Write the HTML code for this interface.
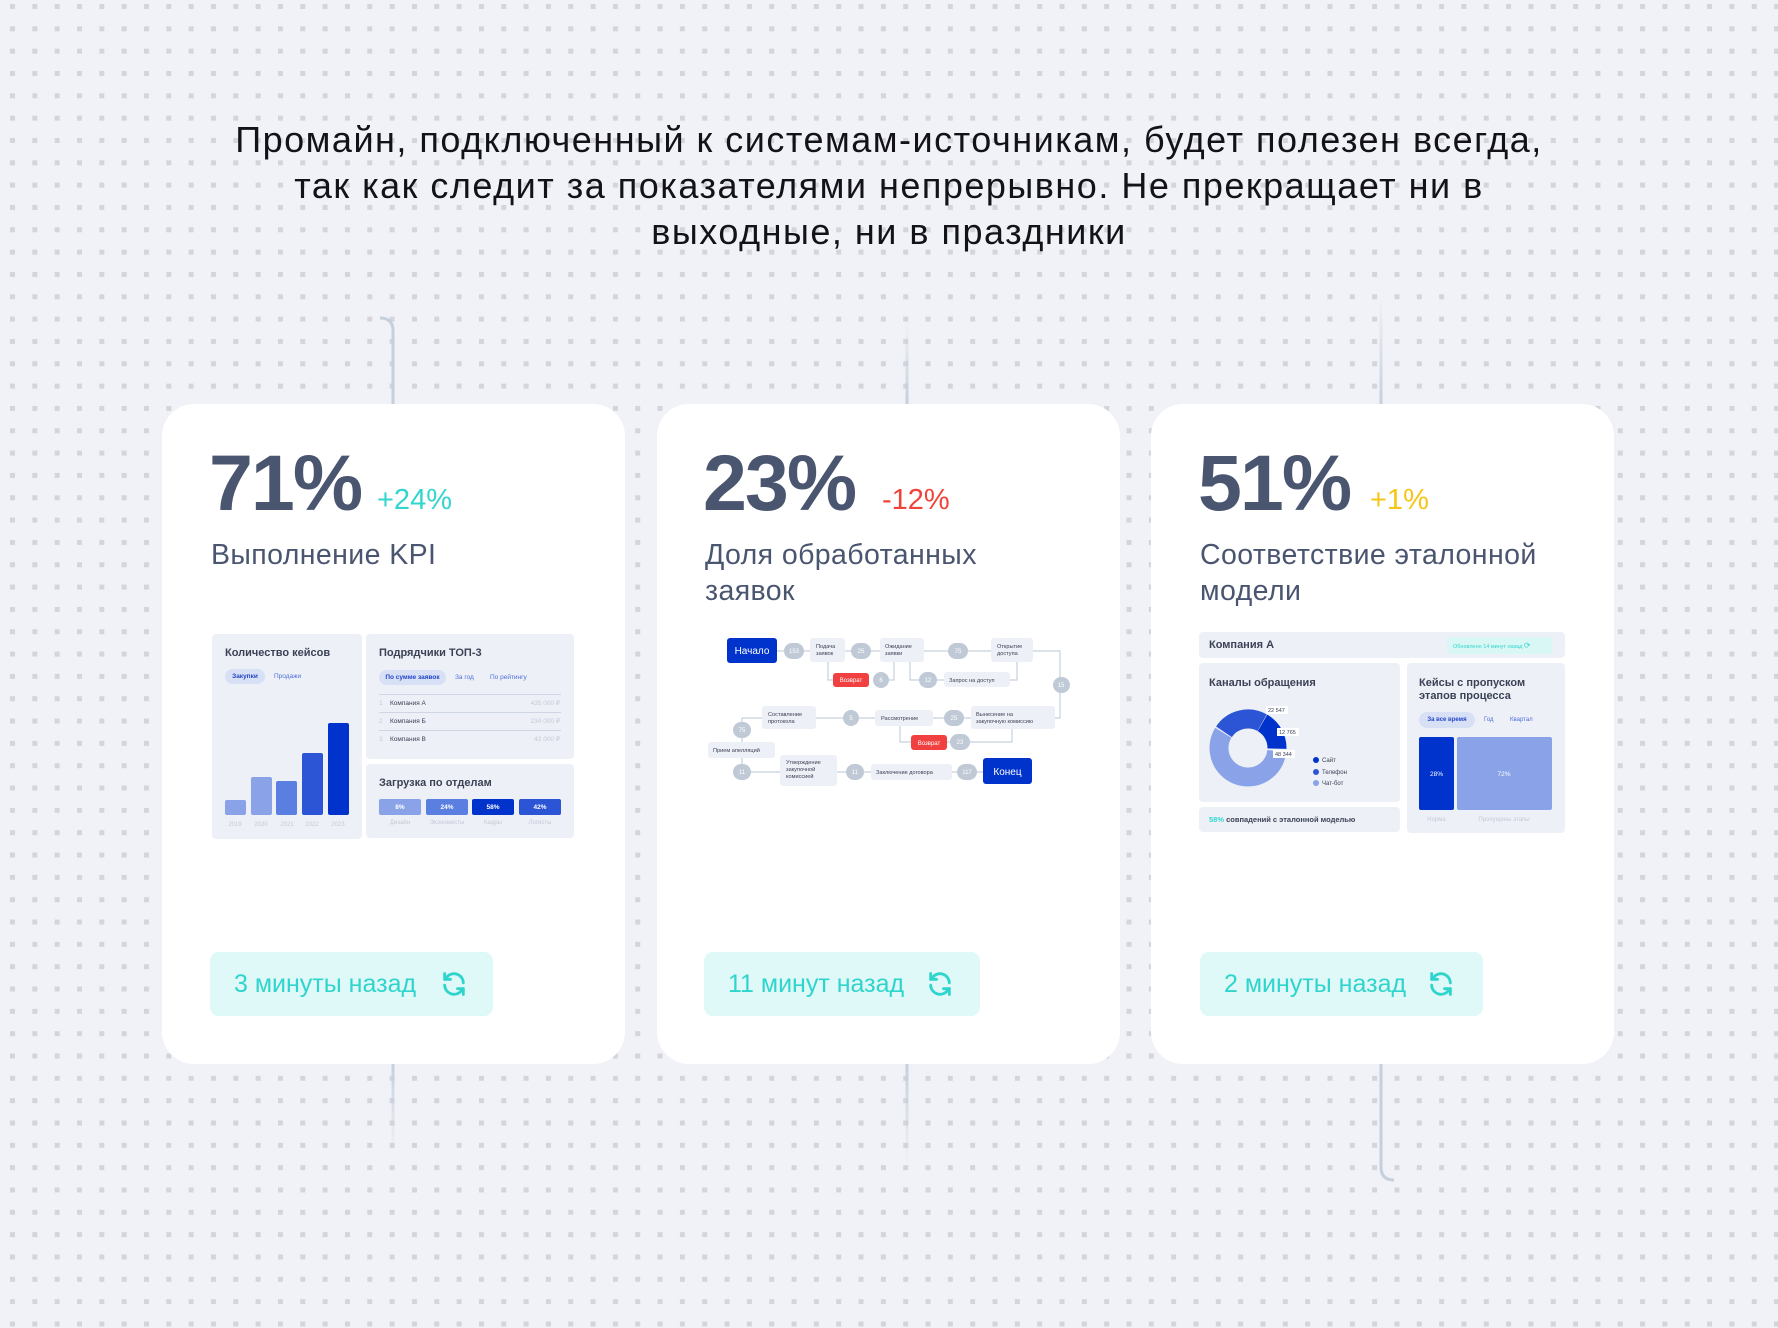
<!DOCTYPE html>
<html><head><meta charset="utf-8">
<style>
*{margin:0;padding:0;box-sizing:border-box}
html,body{width:1778px;height:1328px;overflow:hidden}
body{position:relative;font-family:"Liberation Sans","Noto Sans CJK SC",sans-serif;background-color:#f1f2f7;}
#dots{position:absolute;left:0;top:0;width:1778px;height:1328px}
.abs{position:absolute}
h1{position:absolute;left:0;width:1778px;top:117px;text-align:center;font-weight:400;font-size:36px;letter-spacing:1.5px;line-height:46px;color:#121218}
.card{position:absolute;top:404px;width:463px;height:660px;background:#fff;border-radius:32px}
.big{position:absolute;top:438px;font-size:79px;font-weight:700;color:#4a5570;letter-spacing:-2px;line-height:90px}
.delta{position:absolute;top:483px;font-size:29px;line-height:34px}
.ttl{position:absolute;top:537px;font-size:28.5px;letter-spacing:0.4px;line-height:36px;color:#4a5570}
.btn{position:absolute;top:952px;height:64px;border-radius:9px;background:#dff8f8;color:#2fd5cc;font-size:25px;line-height:64px;padding-left:24px}
.btn svg{position:absolute;top:18px}
.pn{position:absolute;background:#eef0f7;border-radius:4px}
.t11{font-size:11px;font-weight:700;color:#3b4256;position:absolute}
</style></head><body>
<svg id="dots" width="1778" height="1328">
<defs><pattern id="p" x="10" y="4" width="22.33" height="22.33" patternUnits="userSpaceOnUse"><rect x="0" y="0" width="5" height="5" fill="#d4d4db"/></pattern>
<linearGradient id="gh" x1="0" x2="1"><stop offset="0" stop-color="#c5d0dc" stop-opacity="0"/><stop offset="1" stop-color="#c5d0dc"/></linearGradient>
<linearGradient id="gh2" x1="1" x2="0"><stop offset="0" stop-color="#c5d0dc" stop-opacity="0"/><stop offset="1" stop-color="#c5d0dc"/></linearGradient>
<linearGradient id="gvt" x1="0" x2="0" y1="0" y2="1"><stop offset="0" stop-color="#c5d0dc" stop-opacity="0"/><stop offset="1" stop-color="#c5d0dc"/></linearGradient>
<linearGradient id="gvb" x1="0" x2="0" y1="0" y2="1"><stop offset="0" stop-color="#c5d0dc"/><stop offset="1" stop-color="#c5d0dc" stop-opacity="0"/></linearGradient>
</defs>
<rect width="1778" height="1328" fill="url(#p)"/>
<path d="M240 318 H381" stroke="url(#gh)" stroke-width="3" fill="none"/>
<path d="M380 318 Q393 318 393 331 V404" stroke="#c5d0dc" stroke-width="3" fill="none"/>
<rect x="391.5" y="1064" width="3" height="90" fill="url(#gvb)"/>
<rect x="905.5" y="320" width="3" height="84" fill="url(#gvt)"/>
<rect x="905.5" y="1064" width="3" height="100" fill="url(#gvb)"/>
<rect x="1379.5" y="296" width="3" height="108" fill="url(#gvt)"/>
<path d="M1381 1064 V1167 Q1381 1180 1394 1180" stroke="#c5d0dc" stroke-width="3" fill="none"/>
<path d="M1393 1180 H1585" stroke="url(#gh2)" stroke-width="3" fill="none"/>
</svg>

<h1>Промайн, подключенный к системам-источникам, будет полезен всегда,<br>так как следит за показателями непрерывно. Не прекращает ни в<br>выходные, ни в праздники</h1>

<div class="card" style="left:162px"></div>
<div class="card" style="left:657px"></div>
<div class="card" style="left:1151px"></div>

<!-- card 1 -->
<div class="big" style="left:209px">71%</div>
<div class="delta" style="left:377px;color:#33d6cf">+24%</div>
<div class="ttl" style="left:211px">Выполнение KPI</div>

<div class="pn" style="left:212px;top:634px;width:150px;height:205px"></div>
<div class="t11" style="left:225px;top:647px;font-weight:600">Количество кейсов</div>
<div class="abs" style="left:225px;top:669px;width:40px;height:15px;border-radius:8px;background:#d8e0f6;font-size:6.5px;color:#2346c8;font-weight:700;text-align:center;line-height:15px">Закупки</div>
<div class="abs" style="left:274px;top:669px;font-size:6.5px;color:#4d6fdc;line-height:15px">Продажи</div>
<svg class="abs" style="left:212px;top:700px" width="150" height="135">
<rect x="13" y="100" width="21" height="15" rx="2" fill="#8aa3e8"/>
<rect x="39" y="77" width="21" height="38" rx="2" fill="#8aa3e8"/>
<rect x="64" y="81" width="21" height="34" rx="2" fill="#5b7fe0"/>
<rect x="90" y="53" width="21" height="62" rx="2" fill="#2c55d6"/>
<rect x="116" y="23" width="21" height="92" rx="2" fill="#0033cc"/>
<g font-size="6" fill="#c3c9d6" text-anchor="middle" font-family="Liberation Sans"><text x="23" y="126">2019</text><text x="49" y="126">2020</text><text x="75" y="126">2021</text><text x="100" y="126">2022</text><text x="126" y="126">2023</text></g>
</svg>

<div class="pn" style="left:366px;top:634px;width:208px;height:125px"></div>
<div class="t11" style="left:379px;top:647px;font-weight:600">Подрядчики ТОП-3</div>
<div class="abs" style="left:379px;top:670px;width:67px;height:15px;border-radius:8px;background:#d8e0f6;font-size:6.5px;color:#2346c8;font-weight:700;text-align:center;line-height:15px">По сумме заявок</div>
<div class="abs" style="left:455px;top:670px;font-size:6.5px;color:#4d6fdc;line-height:15px">За год</div>
<div class="abs" style="left:490px;top:670px;font-size:6.5px;color:#4d6fdc;line-height:15px">По рейтингу</div>
<svg class="abs" style="left:366px;top:690px" width="208" height="60" font-family="Liberation Sans">
<line x1="13" x2="195" y1="4.5" y2="4.5" stroke="#cfd6e3"/><line x1="13" x2="195" y1="22.5" y2="22.5" stroke="#cfd6e3"/><line x1="13" x2="195" y1="40.5" y2="40.5" stroke="#cfd6e3"/>
<g font-size="6.5"><text x="13" y="15" fill="#c3c9d6">1</text><text x="24" y="15" fill="#3b4256">Компания А</text><text x="194" y="15" fill="#c3c9d6" text-anchor="end">435 000 ₽</text>
<text x="13" y="33" fill="#c3c9d6">2</text><text x="24" y="33" fill="#3b4256">Компания Б</text><text x="194" y="33" fill="#c3c9d6" text-anchor="end">234 000 ₽</text>
<text x="13" y="51" fill="#c3c9d6">3</text><text x="24" y="51" fill="#3b4256">Компания В</text><text x="194" y="51" fill="#c3c9d6" text-anchor="end">42 000 ₽</text></g>
</svg>

<div class="pn" style="left:366px;top:764px;width:208px;height:74px"></div>
<div class="t11" style="left:379px;top:777px;font-weight:600">Загрузка по отделам</div>
<svg class="abs" style="left:366px;top:795px" width="208" height="40" font-family="Liberation Sans">
<rect x="13" y="4" width="42" height="16" rx="2" fill="#8aa3e8"/><rect x="60" y="4" width="42" height="16" rx="2" fill="#5b7fe0"/><rect x="106" y="4" width="42" height="16" rx="2" fill="#0033cc"/><rect x="153" y="4" width="42" height="16" rx="2" fill="#2c55d6"/>
<g font-size="6.5" fill="#fff" text-anchor="middle" font-weight="700"><text x="34" y="14">8%</text><text x="81" y="14">24%</text><text x="127" y="14">58%</text><text x="174" y="14">42%</text></g>
<g font-size="6" fill="#c3c9d6" text-anchor="middle"><text x="34" y="29">Дизайн</text><text x="81" y="29">Экономисты</text><text x="127" y="29">Кадры</text><text x="174" y="29">Логисты</text></g>
</svg>

<div class="btn" style="left:210px;width:283px">3 минуты назад<svg style="left:230px" width="28" height="28" viewBox="0 0 24 24" fill="none" stroke="#2fd5cc" stroke-width="2.4" stroke-linecap="round" stroke-linejoin="round"><path d="M20 11A8 8 0 0 0 5.5 6.5L4 8"/><path d="M4 3v5h5"/><path d="M4 13a8 8 0 0 0 14.5 4.5L20 16"/><path d="M20 21v-5h-5"/></svg></div>

<!-- card 2 -->
<div class="big" style="left:703px">23%</div>
<div class="delta" style="left:882px;color:#f0443a">-12%</div>
<div class="ttl" style="left:705px">Доля обработанных<br>заявок</div>

<svg class="abs" style="left:690px;top:620px" width="400" height="180" font-family="Liberation Sans">
<g stroke="#c5d0dc" stroke-width="1.2" fill="none">
<path d="M87 31 H301"/><path d="M343 31 H370 V98 H365"/>
<path d="M138 42 V60 H143"/><path d="M191 60 H204 V42"/>
<path d="M220 42 V60 H254"/><path d="M320 60 H327 V42"/>
<path d="M281 98 H243"/><path d="M185 98 H126"/><path d="M72 98 H52 V152 H90"/>
<path d="M210 106 V122 H221"/><path d="M257 122 H322 V109"/>
<path d="M147 152 H181"/><path d="M262 152 H293"/>
</g>
<rect x="37" y="18" width="50" height="25" rx="3" fill="#0033cc"/><text x="62" y="34" font-size="10" fill="#fff" text-anchor="middle">Начало</text>
<rect x="293" y="138" width="49" height="26" rx="3" fill="#0033cc"/><text x="317.5" y="155" font-size="10" fill="#fff" text-anchor="middle">Конец</text>
<g fill="#eef0f7">
<rect x="120" y="18" width="35" height="24" rx="3"/><rect x="190" y="18" width="44" height="24" rx="3"/><rect x="301" y="18" width="42" height="24" rx="3"/>
<rect x="254" y="52" width="66" height="15" rx="3"/><rect x="281" y="86" width="84" height="23" rx="3"/><rect x="185" y="90" width="58" height="16" rx="3"/>
<rect x="72" y="86" width="54" height="23" rx="3"/><rect x="18" y="122" width="67" height="16" rx="3"/><rect x="90" y="135" width="57" height="31" rx="3"/><rect x="181" y="144" width="81" height="16" rx="3"/>
</g>
<g fill="#f04040"><rect x="143" y="53" width="36" height="14" rx="3"/><rect x="221" y="115" width="36" height="15" rx="3"/></g>
<g fill="#fff" font-size="6" text-anchor="middle"><text x="161" y="62">Возврат</text><text x="239" y="125">Возврат</text></g>
<g fill="#c0cad6">
<rect x="94" y="23" width="20" height="16" rx="8"/><rect x="161" y="23" width="20" height="16" rx="8"/><rect x="258" y="23" width="20" height="16" rx="8"/>
<rect x="183" y="52" width="16" height="16" rx="8"/><rect x="229" y="52" width="18" height="16" rx="8"/><rect x="363" y="57" width="17" height="16" rx="8"/>
<rect x="254" y="90" width="20" height="16" rx="8"/><rect x="153" y="90" width="16" height="16" rx="8"/><rect x="43" y="102" width="18" height="16" rx="8"/>
<rect x="260" y="114" width="20" height="16" rx="8"/><rect x="43" y="144" width="18" height="16" rx="8"/><rect x="156" y="144" width="18" height="16" rx="8"/><rect x="267" y="144" width="20" height="16" rx="8"/>
</g>
<g fill="#fff" font-size="6" text-anchor="middle">
<text x="104" y="33">153</text><text x="171" y="33">25</text><text x="268" y="33">75</text><text x="191" y="62">6</text><text x="238" y="62">12</text><text x="371" y="67">15</text>
<text x="264" y="100">25</text><text x="161" y="100">5</text><text x="52" y="112">75</text><text x="270" y="124">23</text><text x="52" y="154">11</text><text x="165" y="154">11</text><text x="277" y="154">117</text>
</g>
<g fill="#3b4256" font-size="5.6">
<text x="126" y="28">Подача</text><text x="126" y="35">заявок</text>
<text x="195" y="28">Ожидание</text><text x="195" y="35">заявки</text>
<text x="307" y="28">Открытие</text><text x="307" y="35">доступа</text>
<text x="259" y="62">Запрос на доступ</text>
<text x="286" y="96">Вынесение на</text><text x="286" y="103">закупочную комиссию</text>
<text x="191" y="100">Рассмотрение</text>
<text x="78" y="96">Составление</text><text x="78" y="103">протокола</text>
<text x="23" y="132">Прием апелляций</text>
<text x="96" y="144">Утверждение</text><text x="96" y="151">закупочной</text><text x="96" y="158">комиссией</text>
<text x="186" y="154">Заключение договора</text>
</g>
</svg>

<div class="btn" style="left:704px;width:276px">11 минут назад<svg style="left:222px" width="28" height="28" viewBox="0 0 24 24" fill="none" stroke="#2fd5cc" stroke-width="2.4" stroke-linecap="round" stroke-linejoin="round"><path d="M20 11A8 8 0 0 0 5.5 6.5L4 8"/><path d="M4 3v5h5"/><path d="M4 13a8 8 0 0 0 14.5 4.5L20 16"/><path d="M20 21v-5h-5"/></svg></div>

<!-- card 3 -->
<div class="big" style="left:1198px">51%</div>
<div class="delta" style="left:1370px;color:#f5c518">+1%</div>
<div class="ttl" style="left:1200px">Соответствие эталонной<br>модели</div>

<div class="pn" style="left:1199px;top:632px;width:366px;height:26px"></div>
<div class="t11" style="left:1209px;top:639px">Компания А</div>
<div class="abs" style="left:1447px;top:637px;width:105px;height:17px;border-radius:3px;background:#d9f7f5;font-size:5.5px;color:#33d6cf;line-height:17px;padding-left:6px">Обновлено 14 минут назад <span style="font-size:8px">⟳</span></div>
<div class="pn" style="left:1199px;top:663px;width:201px;height:139px"></div>
<div class="t11" style="left:1209px;top:677px;font-weight:600">Каналы обращения</div>
<svg class="abs" style="left:1199px;top:700px" width="201" height="100" font-family="Liberation Sans">
<g transform="translate(49 48)" fill="none" stroke-width="19">
<circle r="29" stroke="#8aa3e8" stroke-dasharray="104 300" transform="rotate(6)"/>
<circle r="29" stroke="#2c55d6" stroke-dasharray="43 300" transform="rotate(214)"/>
<circle r="29" stroke="#0033cc" stroke-dasharray="31 300" transform="rotate(300)"/>
</g>
<g font-size="5.5" fill="#3b4256"><rect x="67" y="6" width="22" height="8" fill="#fff"/><text x="69" y="12">22 547</text>
<rect x="78" y="28" width="22" height="8" fill="#fff"/><text x="80" y="34">12 765</text>
<rect x="74" y="50" width="22" height="8" fill="#fff"/><text x="76" y="56">48 344</text></g>
<circle cx="117" cy="60" r="3" fill="#0033cc"/><circle cx="117" cy="72" r="3" fill="#2c55d6"/><circle cx="117" cy="83" r="3" fill="#8aa3e8"/>
<g font-size="6" fill="#3b4256"><text x="123" y="62">Сайт</text><text x="123" y="74">Телефон</text><text x="123" y="85">Чат-бот</text></g>
</svg>
<div class="pn" style="left:1199px;top:807px;width:201px;height:25px"></div>
<div class="abs" style="left:1209px;top:815px;font-size:7.5px;font-weight:700;color:#3b4256"><span style="color:#33d6cf">58%</span> совпадений с эталонной моделью</div>
<div class="pn" style="left:1407px;top:663px;width:158px;height:170px"></div>
<div class="t11" style="left:1419px;top:677px;font-weight:600;line-height:13px">Кейсы с пропуском<br>этапов процесса</div>
<div class="abs" style="left:1419px;top:712px;width:56px;height:16px;border-radius:8px;background:#d8e0f6;font-size:6px;color:#2346c8;font-weight:700;text-align:center;line-height:16px">За все время</div>
<div class="abs" style="left:1484px;top:712px;font-size:6px;color:#4d6fdc;line-height:16px">Год</div>
<div class="abs" style="left:1510px;top:712px;font-size:6px;color:#4d6fdc;line-height:16px">Квартал</div>
<svg class="abs" style="left:1407px;top:735px" width="158" height="95" font-family="Liberation Sans">
<rect x="12" y="2" width="35" height="73" rx="2" fill="#0033cc"/><rect x="50" y="2" width="95" height="73" rx="2" fill="#8aa3e8"/>
<g fill="#fff" font-size="6.5" text-anchor="middle"><text x="29.5" y="41">28%</text><text x="97" y="41">72%</text></g>
<g fill="#c3c9d6" font-size="6" text-anchor="middle"><text x="29.5" y="86">Норма</text><text x="97" y="86">Пропущены этапы</text></g>
</svg>

<div class="btn" style="left:1200px;width:283px">2 минуты назад<svg style="left:227px" width="28" height="28" viewBox="0 0 24 24" fill="none" stroke="#2fd5cc" stroke-width="2.4" stroke-linecap="round" stroke-linejoin="round"><path d="M20 11A8 8 0 0 0 5.5 6.5L4 8"/><path d="M4 3v5h5"/><path d="M4 13a8 8 0 0 0 14.5 4.5L20 16"/><path d="M20 21v-5h-5"/></svg></div>
</body></html>
